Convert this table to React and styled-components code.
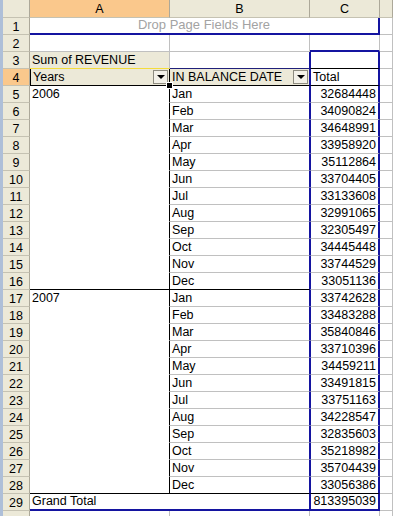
import React from "react";
import styled, { createGlobalStyle } from "styled-components";

const GlobalStyle = createGlobalStyle`
	html, body {
		margin: 0;
		padding: 0;
		background: #fff;
	}
	body {
		font-family: "Liberation Sans", Arial, sans-serif;
	}
`;

const GRID = "1px solid #c0c0c0";
const BLACK = "1px solid #000";
const BLUE = "2px solid #1414a0";
const BLUE1 = "1px solid #1414a0";
const WHITE = "1px solid #fff";

const Sheet = styled.div`
	width: 393px;
	height: 516px;
	overflow: hidden;
	display: flex;
	background: #fff;
`;

const Frame = styled.div`
	width: 3px;
	flex-shrink: 0;
	background: #aebfd8;
`;

const Grid = styled.div`
	flex: 1;
	display: flex;
	flex-direction: column;
	min-width: 0;
`;

const Row = styled.div`
	display: flex;
	flex-shrink: 0;
	height: ${(p) => p.$h || 17}px;
`;

const Head = styled.div`
	box-sizing: border-box;
	width: ${(p) => (p.$w ? `${p.$w}px` : "auto")};
	flex: ${(p) => (p.$w ? "none" : "1")};
	background: ${(p) => (p.$on ? "#fac88c" : "#ece9d8")};
	border-right: 1px solid #aca899;
	border-bottom: 1px solid #c5c2b2;
	display: flex;
	align-items: center;
	justify-content: center;
	font-size: 12.5px;
	color: #000;
	padding-top: 1px;
`;

const Cell = styled.div`
	box-sizing: border-box;
	position: relative;
	width: ${(p) => (p.$w ? `${p.$w}px` : "auto")};
	flex: ${(p) => (p.$w ? "none" : "1")};
	border-right: ${(p) => p.$r || GRID};
	border-bottom: ${(p) => p.$b || GRID};
	border-left: ${(p) => p.$l || "none"};
	background: ${(p) => p.$bg || "#fff"};
	color: ${(p) => p.$color || "#000"};
	font-size: ${(p) => p.$fs || 12.5}px;
	line-height: 14px;
	display: flex;
	align-items: flex-end;
	justify-content: ${(p) =>
		p.$align === "right" ? "flex-end" : p.$align === "center" ? "center" : "flex-start"};
	padding: 0 2px 1px;
	white-space: nowrap;
	${(p) =>
		p.$handle &&
		`
		z-index: 2;
		&::after {
			content: "";
			position: absolute;
			right: -4px;
			bottom: -4px;
			width: 5px;
			height: 5px;
			background: #000;
			border: 1px solid #fff;
		}
	`}
`;

const DropBtn = styled.span`
	box-sizing: border-box;
	width: 15px;
	height: 14px;
	margin-left: auto;
	margin-right: -1px;
	align-self: center;
	background: #f3f1e8;
	border: 1px solid #8e8c80;
	display: flex;
	align-items: center;
	justify-content: center;
	&::before {
		content: "";
		border-left: 4px solid transparent;
		border-right: 4px solid transparent;
		border-top: 4px solid #000;
		margin-top: 1px;
	}
`;

const GRAY = "#ece9d8";
const W = { head: 27, a: 140, b: 140, c: 70 };
const MONTHS = ["Jan", "Feb", "Mar", "Apr", "May", "Jun", "Jul", "Aug", "Sep", "Oct", "Nov", "Dec"];
const YEARS = [
	{
		year: "2006",
		values: [32684448, 34090824, 34648991, 33958920, 35112864, 33704405, 33133608, 32991065, 32305497, 34445448, 33744529, 33051136],
	},
	{
		year: "2007",
		values: [33742628, 33483288, 35840846, 33710396, 34459211, 33491815, 33751163, 34228547, 32835603, 35218982, 35704439, 33056386],
	},
];

// label is hidden for the row that only peeks in at the bottom edge
function SheetRow({ n, label = n, children }) {
	return (
		<Row>
			<Head $w={W.head} $on={n === 4}>
				{label}
			</Head>
			{children}
			<Cell />
		</Row>
	);
}

export default function App() {
	let n = 4;
	const body = [];
	YEARS.forEach((y, yi) => {
		y.values.forEach((v, i) => {
			n += 1;
			const last = i === 11;
			body.push(
				<SheetRow key={n} n={n}>
					<Cell $w={W.a} $r={BLACK} $b={last ? BLACK : WHITE}>
						{i === 0 ? y.year : ""}
					</Cell>
					<Cell $w={W.b} $r={BLUE1} $b={last ? BLACK : GRID}>
						{MONTHS[i]}
					</Cell>
					<Cell $w={W.c} $l={BLUE1} $r={BLUE} $b={yi === 1 && last ? BLACK : GRID} $align="right">
						{v}
					</Cell>
				</SheetRow>
			);
		});
	});

	return (
		<>
			<GlobalStyle />
			<Sheet>
				<Frame />
				<Grid>
					<Row $h={18}>
						<Head $w={W.head} />
						<Head $w={W.a} $on>
							A
						</Head>
						<Head $w={W.b}>B</Head>
						<Head $w={W.c}>C</Head>
						<Head />
					</Row>
					<SheetRow n={1}>
						<Cell $w={W.a + W.b + W.c} $r={BLUE} $b={BLUE} $align="center" $color="#a3a3a3" $fs={13}>
							Drop Page Fields Here
						</Cell>
					</SheetRow>
					<SheetRow n={2}>
						<Cell $w={W.a} />
						<Cell $w={W.b} />
						<Cell $w={W.c} $b={BLUE} />
					</SheetRow>
					<SheetRow n={3}>
						<Cell $w={W.a} $bg={GRAY} $b="1px solid #f4dc3c">
							Sum of REVENUE
						</Cell>
						<Cell $w={W.b} $r={BLUE1} $b="1px solid #20207a" />
						<Cell $w={W.c} $l={BLUE1} $r={BLUE} $b={BLACK} />
					</SheetRow>
					<SheetRow n={4}>
						<Cell $w={W.a} $bg={GRAY} $l={BLACK} $r={BLACK} $b={BLACK} $handle>
							Years
							<DropBtn />
						</Cell>
						<Cell $w={W.b} $bg={GRAY} $r={BLUE1} $b={BLACK}>
							IN BALANCE DATE
							<DropBtn />
						</Cell>
						<Cell $w={W.c} $l={BLUE1} $r={BLUE} $b={BLACK}>
							Total
						</Cell>
					</SheetRow>
					{body}
					<SheetRow n={29}>
						<Cell $w={W.a + W.b} $r={BLUE1} $b={BLUE}>
							Grand Total
						</Cell>
						<Cell $w={W.c} $l={BLUE1} $r={BLUE} $b={BLUE} $align="right">
							813395039
						</Cell>
					</SheetRow>
					<SheetRow n={30} label="">
						<Cell $w={W.a} />
						<Cell $w={W.b} />
						<Cell $w={W.c} />
					</SheetRow>
				</Grid>
			</Sheet>
		</>
	);
}
